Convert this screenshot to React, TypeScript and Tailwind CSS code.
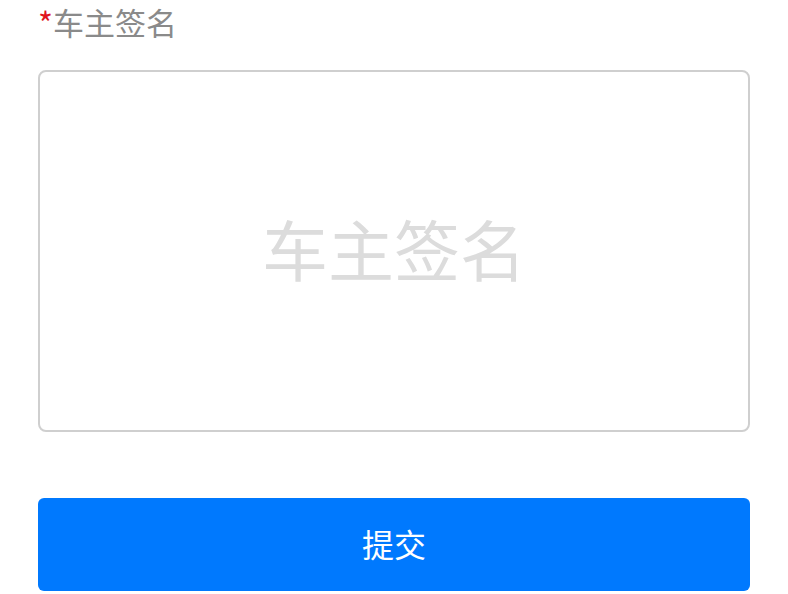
export default function App() {
  return (
    <div
      className="w-[788px] h-[594px] bg-white px-[38px] overflow-hidden"
      style={{ fontFamily: '"Noto Sans CJK SC", "Noto Sans", sans-serif' }}
    >
      <div className="h-[44px] flex items-center text-[31px] leading-[44px] text-[#8a8a8a]">
        <span className="text-[#e0141e] text-[32px]">*</span>
        <span>车主签名</span>
      </div>
      <div className="mt-[26px] h-[362px] border-2 border-[#cfcfcf] rounded-[8px] flex items-center justify-center">
        <span className="text-[66px] leading-none text-[#dcdcdc] -mt-[8px]">车主签名</span>
      </div>
      <button className="mt-[66px] w-full h-[93px] bg-[#0079fe] rounded-[6px] text-white text-[32px] flex items-center justify-center">
        <span className="-mt-[4px]">提交</span>
      </button>
    </div>
  );
}
